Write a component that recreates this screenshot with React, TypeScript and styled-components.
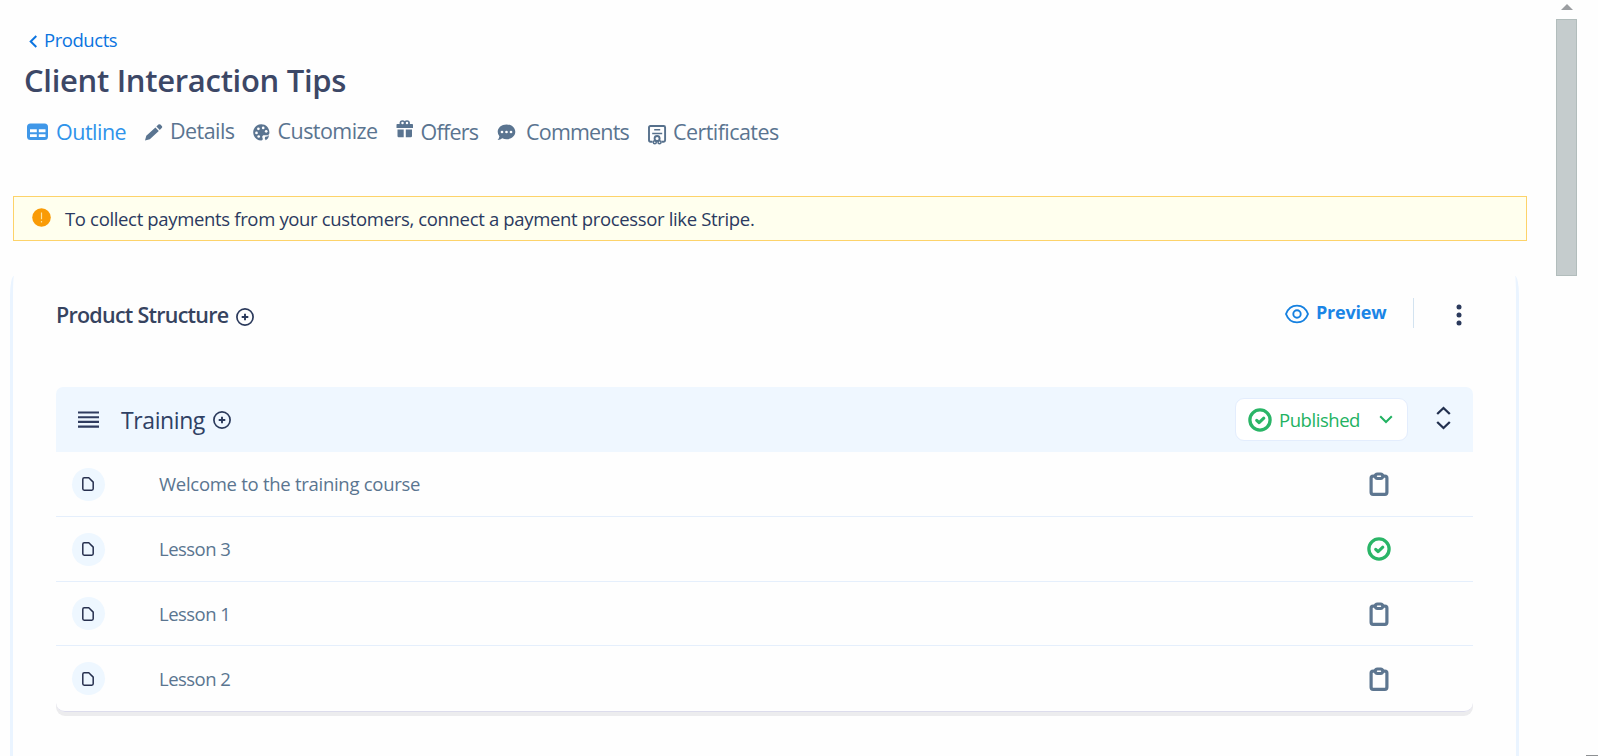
import React from "react";
import styled, { createGlobalStyle } from "styled-components";

const Global = createGlobalStyle`
  * { box-sizing: border-box; }
  html, body { margin: 0; height: 100%; overflow: hidden; background: #fefefe; }
  body { font-family: "Open Sans", "Noto Sans", sans-serif; color: #2f4164; }
  svg { display: block; flex: none; }
`;

const Page = styled.div`
  display: flex;
  width: 1598px;
  height: 756px;
  overflow: hidden;
`;

const Main = styled.main`
  width: 1556px;
  height: 756px;
  display: flex;
  flex-direction: column;
  overflow: hidden;
`;

const Label = styled.span<{ $size: number; $track?: number; $weight?: number }>`
  font-size: ${(p) => p.$size}px;
  line-height: 30px;
  height: 30px;
  font-weight: ${(p) => p.$weight ?? 370};
  letter-spacing: ${(p) => p.$track ?? 0}px;
  white-space: nowrap;
`;

const BackLink = styled.a`
  display: flex;
  align-items: center;
  gap: 6px;
  height: 30px;
  margin: 25px 0 0 29px;
  color: #0b74e0;
  svg { margin-top: 2px; }
`;

const Title = styled.h1`
  margin: 4px 0 0 24px;
  height: 42px;
  font-size: 31px;
  line-height: 42px;
  font-weight: 600;
  letter-spacing: -0.3px;
  color: #3c4766;
  white-space: nowrap;
`;

const Tabs = styled.nav`
  display: flex;
  height: 30px;
  margin: 15px 0 0 27px;
`;

const Tab = styled.a<{ $width: number; $active?: boolean; $raise?: number }>`
  display: flex;
  width: ${(p) => p.$width}px;
  height: 30px;
  color: ${(p) => (p.$active ? "#2f93ea" : "#5a7490")};
  ${Label} { margin-top: ${(p) => 1 - (p.$raise ?? 0)}px; }
`;

const TabIcon = styled.span<{ $width: number; $top: number }>`
  flex: none;
  width: ${(p) => p.$width}px;
  padding-top: ${(p) => p.$top}px;
`;

const Notice = styled.div`
  display: flex;
  align-items: center;
  width: 1514px;
  height: 45px;
  margin: 50px 0 0 13px;
  padding-left: 18px;
  border: 1px solid #fdd36a;
  background: #ffffee;
  color: #2b3a60;
  svg { margin: 0 14px 3px 0; }
`;

const Card = styled.section`
  width: 1509px;
  height: 480px;
  margin: 35px 0 0 10px;
  padding: 0 43px;
  border: solid #eaf4ff;
  border-width: 0 3px;
  border-radius: 4px 4px 0 0 / 20px 20px 0 0;
`;

const CardHead = styled.header`
  display: flex;
  align-items: flex-start;
  height: 111px;
  padding-top: 22px;
`;

const SectionTitle = styled.h2`
  margin: 2px 0 0 0;
  font-size: 21.5px;
  line-height: 30px;
  font-weight: 600;
  letter-spacing: -0.75px;
  color: #36435f;
  white-space: nowrap;
`;

const Spacer = styled.div`
  flex: 1;
`;

const AddMark = styled.span<{ $left: number; $top: number }>`
  margin: ${(p) => p.$top}px 0 0 ${(p) => p.$left}px;
`;

const Preview = styled.a`
  display: flex;
  gap: 7px;
  width: 128px;
  color: #1a85e6;
  svg { margin-top: 6px; }
  ${Label} { margin-top: -1px; }
`;

const Divider = styled.i`
  width: 1px;
  height: 30px;
  background: #d3e3f0;
`;

const Dots = styled.span`
  margin: 6px 11px 0 42px;
`;

const ModuleBar = styled.div`
  display: flex;
  align-items: center;
  height: 65px;
  padding: 0 22px;
  background: #eff7ff;
  border-radius: 7px 7px 0 0;
`;

const StatusSelect = styled.button`
  display: flex;
  align-items: center;
  width: 173px;
  height: 43px;
  margin: 0 28px 0 0;
  padding: 0 14px 0 12px;
  border: 1px solid #e3edfd;
  border-radius: 9px;
  background: #fff;
  color: #22b262;
  font-family: inherit;
  ${Label} { margin-left: 7px; }
`;

const SortArrows = styled.span`
  margin-bottom: 4px;
`;

const Lessons = styled.ul`
  margin: 0;
  padding: 0;
  list-style: none;
  border-bottom: 1px solid #dcdcec;
  border-radius: 0 0 9px 9px;
  box-shadow: 0 4px 0 #ececee;
`;

const Lesson = styled.li<{ $height: number }>`
  display: flex;
  align-items: center;
  height: ${(p) => p.$height}px;
  padding: 0 82px 0 16px;
  color: #5a7590;
  & + & { border-top: 1px solid #e5effc; }
`;

const FileBadge = styled.span`
  display: grid;
  place-items: center;
  width: 33px;
  height: 33px;
  margin-right: 54px;
  padding-right: 1px;
  border-radius: 50%;
  background: #eef7ff;
`;

const StatusSlot = styled.span`
  display: grid;
  place-items: center;
  width: 24px;
  height: 26px;
`;

const ScrollTrack = styled.aside`
  display: flex;
  flex-direction: column;
  align-items: center;
  width: 21px;
  height: 756px;
  padding-top: 4px;
`;

const ScrollThumb = styled.div`
  width: 21px;
  height: 257px;
  margin-top: 9px;
  border: 1px solid #b2bdbc;
  background: #c5cccd;
`;

const Corner = styled.div`
  align-self: flex-end;
  width: 12px;
  height: 1px;
  margin-left: 9px;
  background: #8d9093;
`;

const PlusCircle = () => (
  <svg width="18" height="18" viewBox="0 0 18 18" fill="none" stroke="#2b3a5c">
    <circle cx="9" cy="9" r="8.1" strokeWidth="1.7" />
    <path d="M9 5.7v6.6M5.7 9h6.6" strokeWidth="1.9" />
  </svg>
);

const CheckCircle = () => (
  <svg width="24" height="24" viewBox="0 0 24 24" fill="none" stroke="#2ab567">
    <circle cx="12" cy="12" r="10.1" strokeWidth="3.3" />
    <path d="M8.7 12.3l2.4 2.3 4.7-4.4" strokeWidth="3.1" strokeLinecap="round" strokeLinejoin="round" />
  </svg>
);

const Clipboard = () => (
  <svg width="20" height="24" viewBox="0 0 20 24" fill="none" stroke="#5d7690">
    <rect x="2.1" y="4.1" width="15.8" height="18.2" rx="2" strokeWidth="3.2" />
    <rect x="6.3" y="2" width="7.4" height="4.4" rx="2.2" strokeWidth="3" fill="#fff" />
  </svg>
);

const FileIcon = () => (
  <svg width="12" height="14" viewBox="0 0 12 14" fill="none" stroke="#27304f" strokeWidth="1.5" strokeLinejoin="round">
    <path d="M2.2.8h4.6l4.4 4.3v6.7q0 1.4-1.4 1.4H2.2Q.8 13.2.8 11.8V2.2Q.8.8 2.2.8z" />
  </svg>
);

const TableIcon = () => (
  <svg width="22" height="18" viewBox="0 0 22 18">
    <rect x="0" y="0.5" width="21" height="16.5" rx="3.5" fill="#3f97e8" />
    <path d="M3 6.3h6.8v3H3zM11.8 6.3h6.7v3h-6.7zM3 11.3h6.8V14H3zM11.8 11.3h6.7V14h-6.7z" fill="#fff" />
  </svg>
);

const PencilIcon = () => (
  <svg width="18" height="17" viewBox="0 0 18 17" fill="#5a7490">
    <path d="M0 16.5l1.3-4.8L10.4 3.4l3.4 3.5L4.8 15.2zM11.4 2.5L13.4.6q1-.9 2 0l1.4 1.5q.9 1-.1 2l-1.9 1.8z" />
  </svg>
);

const PaletteIcon = () => (
  <svg width="17" height="17" viewBox="0 0 17 17">
    <path d="M8.3.3C3.8.3.2 3.8.2 8.3s3.5 8.2 8 8.2c1.600 0 1.800-1.500 1.300-2.500-.7-1.500.1-2.700 1.600-2.700h2.600c1.800 0 2.700-1.100 2.700-2.900C16.400 3.800 12.800.3 8.300.3z" fill="#5a7490" />
    <g fill="#fff">
      <circle cx="5.4" cy="4.8" r="1.35" />
      <circle cx="10.2" cy="3.9" r="1.35" />
      <circle cx="13.2" cy="7.3" r="1.35" />
      <circle cx="3.5" cy="8.9" r="1.35" />
      <circle cx="5.7" cy="12.5" r="1.35" />
    </g>
    <path d="M12.2 12.8q3 .2 3.7-1.8-.1 3.8-3.2 5.2-1.6-1.4-.5-3.4z" fill="#5a7490" />
  </svg>
);

const GiftIcon = () => (
  <svg width="18" height="18" viewBox="0 0 18 18" fill="#5a7490">
    <path d="M.5 4.7q0-.8.8-.8h14.9q.8 0 .8.8v3.2H.5zM1.5 9.5h6.2v7.7H2.7q-1.2 0-1.2-1.2zM9.8 9.5H16V16q0 1.2-1.2 1.2h-5z" />
    <g fill="#fff" stroke="#5a7490" strokeWidth="1.7">
      <ellipse cx="6.5" cy="3.1" rx="2.1" ry="2.1" />
      <ellipse cx="11" cy="3.1" rx="2.1" ry="2.1" />
    </g>
  </svg>
);

const CommentIcon = () => (
  <svg width="19" height="17" viewBox="0 0 19 17">
    <path d="M9.5.4c5 0 8.8 3.2 8.8 7.4s-3.8 7.4-8.8 7.4q-2.2 0-4.2-.9Q3.4 16 .6 16q1.7-1.8 1.8-3.7Q.7 10.4.7 7.8C.7 3.6 4.5.4 9.5.4z" fill="#5a7490" />
    <g fill="#fff">
      <circle cx="5" cy="8" r="1.35" />
      <circle cx="9.5" cy="8" r="1.35" />
      <circle cx="14" cy="8" r="1.35" />
    </g>
  </svg>
);

const CertificateIcon = () => (
  <svg width="19" height="20" viewBox="0 0 19 20" fill="none" stroke="#56708c" strokeWidth="1.9">
    <path d="M4.6 16.7H2.4Q1 16.7 1 15.3V2.4Q1 1 2.4 1h13.3q1.4 0 1.4 1.4v12.9q0 1.4-1.4 1.4H13.5" />
    <path d="M6.2 4.7h6M4.2 8.5h10" strokeWidth="1.5" />
    <circle cx="9.1" cy="13.5" r="2.5" />
    <circle cx="6.8" cy="17.3" r="1.5" strokeWidth="1.5" />
    <circle cx="11.5" cy="17.3" r="1.5" strokeWidth="1.5" />
  </svg>
);

const tabs = [
  { label: "Outline", icon: <TableIcon />, width: 118, slot: 29, top: 7, track: -0.5, active: true },
  { label: "Details", icon: <PencilIcon />, width: 108, slot: 25, top: 8, track: -0.55, raise: 1 },
  { label: "Customize", icon: <PaletteIcon />, width: 143, slot: 24.5, top: 8, track: -0.55, raise: 1 },
  { label: "Offers", icon: <GiftIcon />, width: 101, slot: 24.5, top: 4, track: -0.75 },
  { label: "Comments", icon: <CommentIcon />, width: 151, slot: 29, top: 8, track: -0.8 },
  { label: "Certificates", icon: <CertificateIcon />, width: 140, slot: 25, top: 9, track: -0.56 },
];

const lessons = [
  { name: "Welcome to the training course", height: 64, done: false, track: -0.28 },
  { name: "Lesson 3", height: 65, done: true, track: -0.52 },
  { name: "Lesson 1", height: 64, done: false, track: -0.52 },
  { name: "Lesson 2", height: 66, done: false, track: -0.52 },
];

export default function App() {
  return (
    <>
      <Global />
      <Page>
        <Main>
          <BackLink>
            <svg width="9" height="13" viewBox="0 0 9 13" fill="none" stroke="#0b74e0" strokeWidth="2">
              <path d="M7.3 1L1.7 6.5l5.6 5.5" />
            </svg>
            <Label $size={18.5} $track={-0.45}>Products</Label>
          </BackLink>
          <Title>Client Interaction Tips</Title>
          <Tabs>
            {tabs.map((t) => (
              <Tab key={t.label} $width={t.width} $active={t.active} $raise={t.raise}>
                <TabIcon $width={t.slot} $top={t.top}>{t.icon}</TabIcon>
                <Label $size={21.5} $track={t.track}>{t.label}</Label>
              </Tab>
            ))}
          </Tabs>
          <Notice>
            <svg width="19" height="19" viewBox="0 0 19 19">
              <circle cx="9.5" cy="9.5" r="9.3" fill="#f99b06" />
              <path d="M9.5 4.5v6.8M9.5 13v1.5" stroke="#ffe3a0" strokeWidth="1.2" />
            </svg>
            <Label $size={18.5} $track={-0.34}>To collect payments from your customers, connect a payment processor like Stripe.</Label>
          </Notice>
          <Card>
            <CardHead>
              <SectionTitle>Product Structure</SectionTitle>
              <AddMark $left={8} $top={10}><PlusCircle /></AddMark>
              <Spacer />
              <Preview>
                <svg width="24" height="20" viewBox="0 0 24 20" fill="none" stroke="#1580e0" strokeWidth="1.9">
                  <path d="M1 10C3 4.5 7 1.6 12 1.6S21 4.5 23 10c-2 5.5-6 8.4-11 8.4S3 15.5 1 10z" />
                  <circle cx="12" cy="10" r="3.7" />
                </svg>
                <Label $size={18} $weight={700} $track={-0.2}>Preview</Label>
              </Preview>
              <Divider />
              <Dots>
                <svg width="6" height="22" viewBox="0 0 6 22" fill="#2b3a5c">
                  <circle cx="3" cy="3" r="2.5" />
                  <circle cx="3" cy="11" r="2.5" />
                  <circle cx="3" cy="19" r="2.5" />
                </svg>
              </Dots>
            </CardHead>
            <ModuleBar>
              <svg width="21" height="17" viewBox="0 0 21 17" stroke="#2f3b5e" strokeWidth="2.1">
                <path d="M0 1.5h21M0 6.2h21M0 10.9h21M0 15.6h21" />
              </svg>
              <AddMark $left={22} $top={1}><Label $size={23} $track={-0.4}>Training</Label></AddMark>
              <AddMark $left={8} $top={0}><PlusCircle /></AddMark>
              <Spacer />
              <StatusSelect>
                <CheckCircle />
                <Label $size={18.5} $track={-0.45}>Published</Label>
                <Spacer />
                <svg width="14" height="9" viewBox="0 0 14 9" fill="none" stroke="#22b262" strokeWidth="2">
                  <path d="M1.2 1.2L7 7l5.8-5.8" />
                </svg>
              </StatusSelect>
              <SortArrows>
                <svg width="15" height="24" viewBox="0 0 15 24" fill="none" stroke="#22304f" strokeWidth="2.3">
                  <path d="M1.2 8l6.3-6 6.3 6M1.2 16l6.3 6 6.3-6" />
                </svg>
              </SortArrows>
            </ModuleBar>
            <Lessons>
              {lessons.map((l) => (
                <Lesson key={l.name} $height={l.height}>
                  <FileBadge><FileIcon /></FileBadge>
                  <Label $size={18.5} $track={l.track}>{l.name}</Label>
                  <Spacer />
                  <StatusSlot>{l.done ? <CheckCircle /> : <Clipboard />}</StatusSlot>
                </Lesson>
              ))}
            </Lessons>
          </Card>
        </Main>
        <ScrollTrack>
          <svg width="12" height="6" viewBox="0 0 12 6"><path d="M0 6L6 0l6 6z" fill="#9b9ea1" /></svg>
          <ScrollThumb />
        </ScrollTrack>
        <Corner />
      </Page>
    </>
  );
}
